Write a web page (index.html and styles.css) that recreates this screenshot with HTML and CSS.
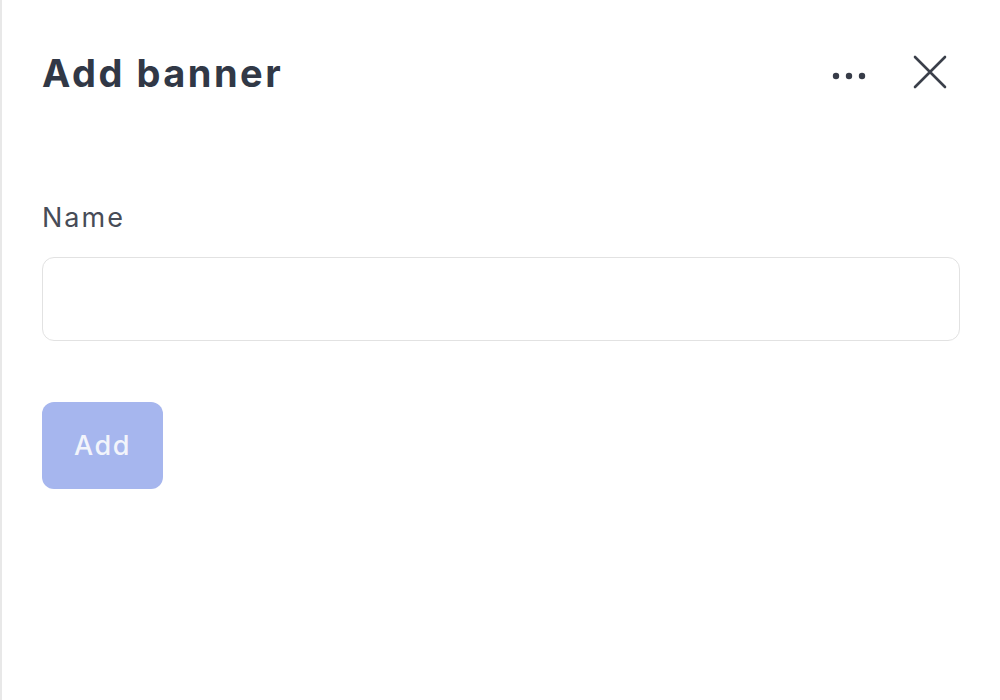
FILE: index.html
```html
<!DOCTYPE html>
<html>
<head>
<meta charset="utf-8">
<link rel="stylesheet" href="styles.css">
</head>
<body>
<div class="panel">
  <div class="header">
    <h1 class="title">Add banner</h1>
    <div class="actions">
      <button class="icon-btn dots" aria-label="More">
        <svg width="34" height="8" viewBox="0 0 34 8"><circle cx="4" cy="4" r="3.2" fill="#373c48"/><circle cx="17" cy="4" r="3.2" fill="#373c48"/><circle cx="30" cy="4" r="3.2" fill="#373c48"/></svg>
      </button>
      <button class="icon-btn close" aria-label="Close">
        <svg width="34" height="34" viewBox="0 0 34 34"><path d="M2 2 L32 32 M32 2 L2 32" stroke="#3a3f4a" stroke-width="2.6" stroke-linecap="round" fill="none"/></svg>
      </button>
    </div>
  </div>
  <div class="form">
    <label class="label">Name</label>
    <div class="input"></div>
    <button class="add-btn">Add</button>
  </div>
</div>
</body>
</html>
```
FILE: styles.css
```css
html, body {
  margin: 0;
  padding: 0;
  height: 100%;
  background: #ffffff;
}
body {
  font-family: "Inter", "Noto Sans", sans-serif;
}
.panel {
  box-sizing: border-box;
  height: 100%;
  border-left: 2px solid #e8e8e8;
  padding: 43px 40px 0 40px;
}
.header {
  display: flex;
  align-items: center;
  justify-content: space-between;
  height: 60px;
}
.title {
  margin: 0;
  font-size: 38px;
  font-weight: 700;
  color: #313846;
  letter-spacing: 2.5px;
}
.actions {
  display: flex;
  align-items: center;
  gap: 47px;
  margin-right: 13px;
}
.icon-btn {
  border: 0;
  background: none;
  padding: 0;
  display: flex;
  align-items: center;
  justify-content: center;
}
.dots {
  margin-top: 6px;
}
.close {
  margin-top: -2px;
}
.form {
  display: flex;
  flex-direction: column;
  align-items: flex-start;
  margin-top: 100px;
}
.label {
  font-size: 27px;
  line-height: 30px;
  color: #474c57;
  font-weight: 400;
  letter-spacing: 2px;
}
.input {
  box-sizing: border-box;
  align-self: stretch;
  margin-top: 24px;
  height: 84px;
  border: 1.5px solid #e2e2e2;
  border-radius: 12px;
}
.add-btn {
  margin-top: 61px;
  width: 121px;
  height: 87px;
  border: 0;
  border-radius: 12px;
  background: #a6b6ee;
  color: #f2f4fb;
  font-family: "Inter", "Noto Sans", sans-serif;
  font-size: 27px;
  font-weight: 500;
  letter-spacing: 1.5px;
}
```
